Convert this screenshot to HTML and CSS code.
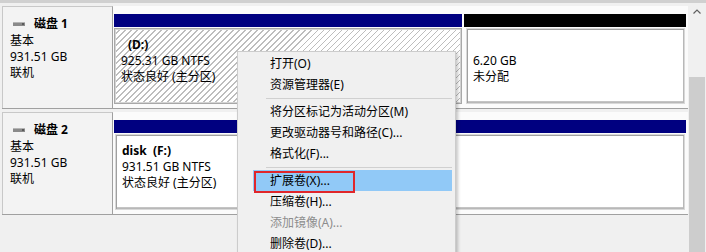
FILE: index.html
```html
<!DOCTYPE html>
<html lang="zh-CN">
<head>
<meta charset="utf-8">
<title>磁盘管理</title>
<link rel="stylesheet" href="styles.css">
</head>
<body>
<div class="window">
  <div class="main">
    <div class="disk">
      <div class="label">
        <div class="title">
          <svg class="hdd" width="12" height="4" viewBox="0 0 12 4"><rect x="0" y="0" width="12" height="4" fill="#8a8a8a"/><rect x="0" y="0" width="12" height="1" fill="#b5b5b5"/><rect x="9" y="1" width="2" height="2" fill="#5a5a5a"/></svg>
          <b>磁盘 1</b>
        </div>
        <div>基本</div>
        <div>931.51 GB</div>
        <div>联机</div>
      </div>
      <div class="parts">
        <div class="part part-d">
          <div class="bar primary"></div>
          <div class="box hatched">
            <div class="name name-d">(D:)</div>
            <div>925.31 GB NTFS</div>
            <div>状态良好 (主分区)</div>
          </div>
        </div>
        <div class="part part-free">
          <div class="bar unalloc"></div>
          <div class="box plain">
            <div class="spacer"></div>
            <div>6.20 GB</div>
            <div>未分配</div>
          </div>
        </div>
      </div>
    </div>
    <div class="disk">
      <div class="label">
        <div class="title">
          <svg class="hdd" width="12" height="4" viewBox="0 0 12 4"><rect x="0" y="0" width="12" height="4" fill="#8a8a8a"/><rect x="0" y="0" width="12" height="1" fill="#b5b5b5"/><rect x="9" y="1" width="2" height="2" fill="#5a5a5a"/></svg>
          <b>磁盘 2</b>
        </div>
        <div>基本</div>
        <div>931.51 GB</div>
        <div>联机</div>
      </div>
      <div class="parts">
        <div class="part part-f">
          <div class="bar primary"></div>
          <div class="box plain">
            <div class="name">disk&nbsp;&nbsp;(F:)</div>
            <div>931.51 GB NTFS</div>
            <div>状态良好 (主分区)</div>
          </div>
        </div>
      </div>
    </div>
  </div>
  <div class="scrollbar">
    <div class="arrow"><svg width="8" height="5" viewBox="0 0 8 5"><path d="M0.5 4.5 L4 1 L7.5 4.5" fill="none" stroke="#606060" stroke-width="1.2"/></svg></div>
    <div class="track"></div>
    <div class="thumb"></div>
  </div>
</div>

<div class="menu">
  <div class="item">打开(O)</div>
  <div class="item">资源管理器(E)</div>
  <div class="sep"></div>
  <div class="item">将分区标记为活动分区(M)</div>
  <div class="item">更改驱动器号和路径(C)...</div>
  <div class="item">格式化(F)...</div>
  <div class="sep"></div>
  <div class="item active">扩展卷(X)...</div>
  <div class="item">压缩卷(H)...</div>
  <div class="item disabled">添加镜像(A)...</div>
  <div class="item">删除卷(D)...</div>
</div>
<div class="annot"></div>
</body>
</html>
```

FILE: styles.css
```css
* { box-sizing: border-box; }
html, body { margin: 0; padding: 0; }
body {
  width: 706px;
  height: 252px;
  overflow: hidden;
  position: relative;
  background: #f0f0f0;
  color: #000;
  font-family: "Noto Sans", "Noto Sans CJK SC", sans-serif;
  font-size: 12px;
  line-height: 16px;
}
.window {
  display: flex;
  height: 252px;
  border-top: 3px solid #d0d0d0;
}
.main {
  flex: 1;
  padding: 3px 0 0 2px;
}
.disk {
  display: grid;
  grid-template-columns: 111px 1fr;
  border-bottom: 1px solid #a0a0a0;
  margin-bottom: 3px;
}
.label {
  background: #f3f3f3;
  border-left: 1px solid #c8c8c8;
  border-top: 1px solid #c8c8c8;
  border-right: 1px solid #a0a0a0;
  padding: 9px 0 0 7px;
}
.title {
  display: flex;
  align-items: center;
  gap: 9px;
  margin-bottom: 1px;
  padding-left: 3px;
}
.title b { font-weight: 700; }
.hdd { display: block; }
.parts {
  display: flex;
  gap: 2px;
  background: #fbfbfb;
  padding: 8px 2px 4px 1px;
}
.part { display: flex; flex-direction: column; }
.part-d { width: 348px; }
.part-free { flex: 1; }
.part-f { flex: 1; }
.bar { height: 13px; }
.bar.primary { background: #000080; }
.bar.unalloc { background: #000; }
.box {
  height: 76px;
  margin-top: 1px;
  padding: 8px 0 0 6px;
}
.hatched {
  border: 1px solid #a8a8a8;
  box-shadow: inset 0 0 0 1px #d4d4d4;
  background: repeating-linear-gradient(135deg, #ffffff 0, #ffffff 3.3px, #bdbdbd 3.3px, #bdbdbd 4.25px);
}
.plain {
  background: #fff;
  border: 1px solid #d8d8d8;
  box-shadow: inset 1px 1px 0 #a0a0a0, inset -1px -1px 0 #b8b8b8, inset 0 -2px 0 #c4c4c4;
  margin-left: 2px;
  margin-right: 1px;
}
.part-f .plain { margin-left: 1px; }
.name { font-weight: 700; }
.name-d { padding-left: 7px; }
.spacer { height: 16px; }
.scrollbar {
  width: 18px;
  display: flex;
  flex-direction: column;
  background: #f0f0f0;
}
.arrow {
  height: 17px;
  display: flex;
  align-items: center;
  justify-content: center;
}
.track { height: 57px; }
.thumb {
  flex: 1;
  margin: 0 1px 0 1px;
  background: #cdcdcd;
}
.menu {
  position: absolute;
  left: 237px;
  top: 51px;
  width: 219px;
  height: 210px;
  background: #f0f0f0;
  border: 1px solid #cccccc;
  box-shadow: 2px 2px 3px rgba(0,0,0,0.22);
  padding: 1px 3px 0 2px;
  font-family: "Noto Sans", "Noto Sans CJK SC", sans-serif;
}
.item {
  height: 21px;
  line-height: 21px;
  padding-left: 30px;
  white-space: nowrap;
}
.item.active {
  background: #91c9f7;
  margin-left: 13px;
  padding-left: 17px;
}
.item.disabled { color: #8d8d8d; }
.sep {
  height: 6px;
  margin-left: 26px;
  display: flex;
  align-items: center;
}
.sep::after {
  content: "";
  display: block;
  width: 100%;
  border-top: 1px solid #d0d0d0;
}
.annot {
  position: absolute;
  left: 254px;
  top: 171px;
  width: 101px;
  height: 22px;
  border: 2px solid #e0262b;
}
```
